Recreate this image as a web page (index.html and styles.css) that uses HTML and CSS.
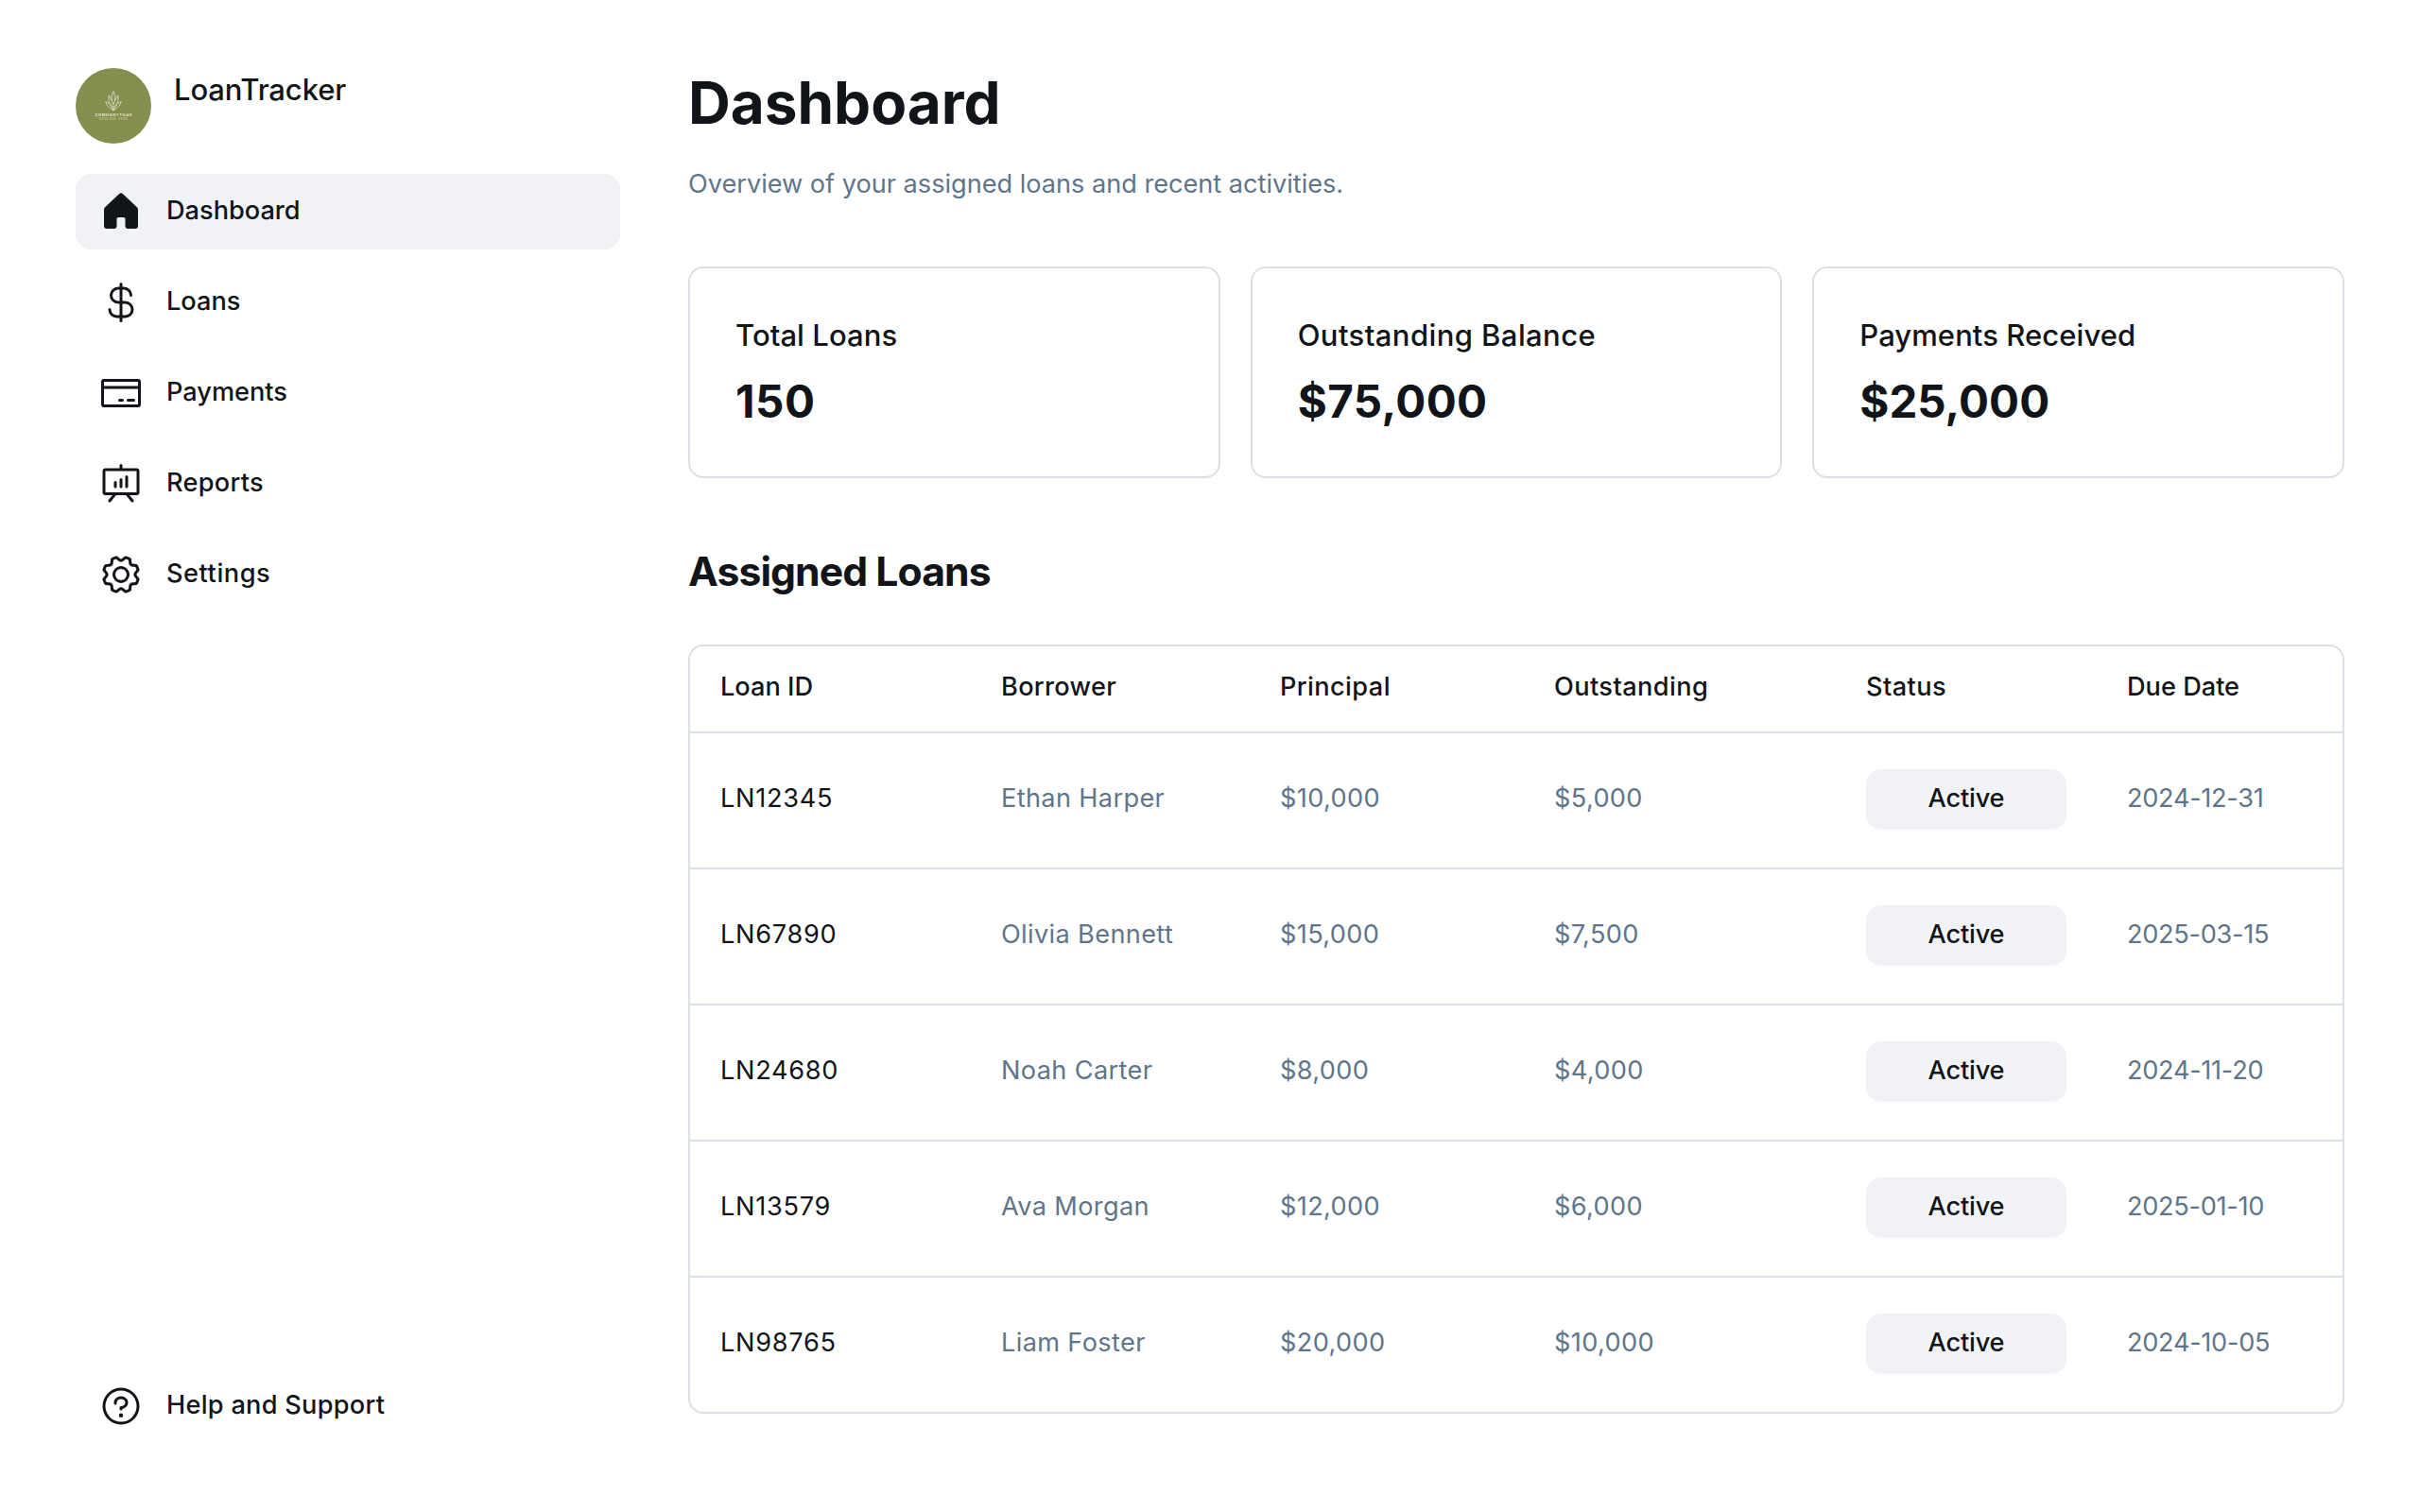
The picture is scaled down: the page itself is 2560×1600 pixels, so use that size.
FILE: index.html
```html
<!DOCTYPE html>
<html lang="en">
<head>
<meta charset="utf-8">
<title>LoanTracker – Dashboard</title>
<link rel="stylesheet" href="styles.css">
</head>
<body>
<div class="app">
  <aside class="sidebar">
    <div class="sidebar-top">
      <div class="brand">
        <svg class="avatar" viewBox="0 0 80 80" role="img" aria-label="Company logo">
          <circle cx="40" cy="40" r="40" fill="#858e4c"/>
          <g fill="none" stroke="#f2f3e4" stroke-width=".7" stroke-linecap="round" stroke-linejoin="round">
            <path d="M40 44.500V40M40 25c-2.400 3.500-2.600 9 0 13.500 2.600-4.500 2.400-10 0-13.500Z"/>
            <path d="M39 40.500c-3.500-2-4.300-6-4-11.500 1.500 1.200 2.600 3 3 5M41 40.500c3.500-2 4.300-6 4-11.500-1.500 1.200-2.600 3-3 5"/>
            <path d="M40 44.500c-2-4-4.200-7.500-8.300-9 .6 3.500 3.500 6.500 8.300 9c2-4 4.200-7.500 8.300-9-.6 3.500-3.500 6.500-8.300 9"/>
          </g>
          <text class="logo-name" x="40" y="50.600" textLength="39">COMHANYTHAK</text>
          <text class="logo-tag" x="40" y="55.200" textLength="30">DAOLAUE HERE</text>
        </svg>
        <div class="brand-name">LoanTracker</div>
      </div>
      <nav class="nav">
        <a class="nav-item active"><svg class="icon" viewBox="0 0 256 256"><path d="M224,115.550V208a16,16,0,0,1-16,16H168a16,16,0,0,1-16-16V168a8,8,0,0,0-8-8H112a8,8,0,0,0-8,8v40a16,16,0,0,1-16,16H48a16,16,0,0,1-16-16V115.550a16,16,0,0,1,5.170-11.780l80-75.480.11-.11a16,16,0,0,1,21.530,0,1.140,1.140,0,0,0,.11.110l80,75.480A16,16,0,0,1,224,115.550Z"/></svg><span class="nav-label">Dashboard</span></a>
        <a class="nav-item"><svg class="icon" viewBox="0 0 256 256"><path d="M152,120H136V56h8a32,32,0,0,1,32,32,8,8,0,0,0,16,0,48.050,48.050,0,0,0-48-48h-8V24a8,8,0,0,0-16,0V40h-8a48,48,0,0,0,0,96h8v64H104a32,32,0,0,1-32-32,8,8,0,0,0-16,0,48.050,48.050,0,0,0,48,48h16v16a8,8,0,0,0,16,0V216h16a48,48,0,0,0,0-96Zm-40,0a32,32,0,0,1,0-64h8v64Zm40,80H136V136h16a32,32,0,0,1,0,64Z"/></svg><span class="nav-label">Loans</span></a>
        <a class="nav-item"><svg class="icon" viewBox="0 0 256 256"><path d="M224,48H32A16,16,0,0,0,16,64V192a16,16,0,0,0,16,16H224a16,16,0,0,0,16-16V64A16,16,0,0,0,224,48Zm0,16V88H32V64Zm0,128H32V104H224v88Zm-16-24a8,8,0,0,1-8,8H168a8,8,0,0,1,0-16h32A8,8,0,0,1,208,168Zm-64,0a8,8,0,0,1-8,8H120a8,8,0,0,1,0-16h16A8,8,0,0,1,144,168Z"/></svg><span class="nav-label">Payments</span></a>
        <a class="nav-item"><svg class="icon" viewBox="0 0 256 256"><path d="M216,40H136V24a8,8,0,0,0-16,0V40H40A16,16,0,0,0,24,56V176a16,16,0,0,0,16,16H79.360L57.750,219a8,8,0,0,0,12.500,10l29.590-37h56.320l29.590,37a8,8,0,1,0,12.500-10l-21.610-27H216a16,16,0,0,0,16-16V56A16,16,0,0,0,216,40Zm0,136H40V56H216V176ZM104,120v24a8,8,0,0,1-16,0V120a8,8,0,0,1,16,0Zm32-16v40a8,8,0,0,1-16,0V104a8,8,0,0,1,16,0Zm32-16v56a8,8,0,0,1-16,0V88a8,8,0,0,1,16,0Z"/></svg><span class="nav-label mid">Reports</span></a>
        <a class="nav-item"><svg class="icon" viewBox="0 0 256 256"><path d="M128,80a48,48,0,1,0,48,48A48.050,48.050,0,0,0,128,80Zm0,80a32,32,0,1,1,32-32A32,32,0,0,1,128,160Zm88-29.840q.06-2.160,0-4.320l14.920-18.640a8,8,0,0,0,1.480-7.060,107.210,107.210,0,0,0-10.880-26.250,8,8,0,0,0-6-3.930l-23.720-2.640q-1.480-1.560-3-3L186,40.540a8,8,0,0,0-3.940-6,107.710,107.710,0,0,0-26.250-10.870,8,8,0,0,0-7.060,1.490L130.160,40Q128,40,125.840,40L107.200,25.110a8,8,0,0,0-7.060-1.480A107.600,107.600,0,0,0,73.890,34.510a8,8,0,0,0-3.930,6L67.320,64.270q-1.560,1.490-3,3L40.540,70a8,8,0,0,0-6,3.940,107.710,107.710,0,0,0-10.870,26.250,8,8,0,0,0,1.490,7.060L40,125.840Q40,128,40,130.160L25.110,148.800a8,8,0,0,0-1.480,7.060,107.210,107.210,0,0,0,10.880,26.250,8,8,0,0,0,6,3.930l23.720,2.640q1.490,1.560,3,3L70,215.460a8,8,0,0,0,3.940,6,107.710,107.710,0,0,0,26.250,10.870,8,8,0,0,0,7.060-1.490L125.840,216q2.160.06,4.320,0l18.640,14.920a8,8,0,0,0,7.060,1.480,107.210,107.210,0,0,0,26.250-10.880,8,8,0,0,0,3.930-6l2.640-23.720q1.560-1.480,3-3L215.460,186a8,8,0,0,0,6-3.940,107.710,107.710,0,0,0,10.870-26.250,8,8,0,0,0-1.490-7.060Zm-16.100-6.500a73.930,73.930,0,0,1,0,8.680,8,8,0,0,0,1.740,5.480l14.190,17.730a91.570,91.570,0,0,1-6.230,15L187,173.110a8,8,0,0,0-5.100,2.640,74.110,74.110,0,0,1-6.140,6.140,8,8,0,0,0-2.640,5.100l-2.510,22.580a91.320,91.320,0,0,1-15,6.230l-17.740-14.190a8,8,0,0,0-5-1.750h-.48a73.930,73.930,0,0,1-8.680,0,8,8,0,0,0-5.480,1.740L100.450,215.800a91.570,91.570,0,0,1-15-6.230L82.890,187a8,8,0,0,0-2.640-5.100,74.110,74.110,0,0,1-6.140-6.140,8,8,0,0,0-5.100-2.640L46.430,170.600a91.320,91.320,0,0,1-6.230-15l14.190-17.740a8,8,0,0,0,1.740-5.480,73.930,73.930,0,0,1,0-8.680,8,8,0,0,0-1.740-5.480L40.200,100.450a91.570,91.570,0,0,1,6.230-15L69,82.890a8,8,0,0,0,5.100-2.640,74.110,74.110,0,0,1,6.140-6.140A8,8,0,0,0,82.890,69L85.400,46.430a91.320,91.320,0,0,1,15-6.230l17.740,14.190a8,8,0,0,0,5.480,1.740,73.930,73.930,0,0,1,8.680,0,8,8,0,0,0,5.480-1.740L155.550,40.200a91.570,91.570,0,0,1,15,6.230L173.110,69a8,8,0,0,0,2.640,5.100,74.110,74.110,0,0,1,6.140,6.140,8,8,0,0,0,5.100,2.640l22.580,2.510a91.320,91.320,0,0,1,6.230,15l-14.190,17.740A8,8,0,0,0,199.870,123.660Z"/></svg><span class="nav-label wide">Settings</span></a>
      </nav>
    </div>
    <a class="nav-item"><svg class="icon" viewBox="0 0 256 256"><path d="M140,180a12,12,0,1,1-12-12A12,12,0,0,1,140,180ZM128,72c-22.060,0-40,16.150-40,36v4a8,8,0,0,0,16,0v-4c0-11,10.770-20,24-20s24,9,24,20-10.770,20-24,20a8,8,0,0,0-8,8v8a8,8,0,0,0,16,0v-.72c18.240-3.350,32-17.900,32-35.280C168,88.150,150.060,72,128,72Zm104,56A104,104,0,1,1,128,24,104.110,104.110,0,0,1,232,128Zm-16,0a88,88,0,1,0-88,88A88.100,88.100,0,0,0,216,128Z"/></svg><span class="nav-label mid">Help and Support</span></a>
  </aside>

  <main class="main">
    <h1 class="title">Dashboard</h1>
    <p class="subtitle">Overview of your assigned loans and recent activities.</p>

    <section class="stats">
      <div class="stat"><div class="stat-label">Total Loans</div><div class="stat-value loose">150</div></div>
      <div class="stat"><div class="stat-label wide">Outstanding Balance</div><div class="stat-value">$75,000</div></div>
      <div class="stat"><div class="stat-label">Payments Received</div><div class="stat-value tight">$25,000</div></div>
    </section>

    <h2 class="section-title">Assigned Loans</h2>

    <div class="table">
      <div class="row head">
        <div class="cell">Loan ID</div><div class="cell wide">Borrower</div><div class="cell wider">Principal</div><div class="cell wider">Outstanding</div><div class="cell wider">Status</div><div class="cell">Due Date</div>
      </div>
      <div class="row"><div class="cell id">LN12345</div><div class="cell">Ethan Harper</div><div class="cell">$10,000</div><div class="cell">$5,000</div><div class="status"><span class="cell pill">Active</span></div><div class="cell date">2024-12-31</div></div>
      <div class="row"><div class="cell id">LN67890</div><div class="cell">Olivia Bennett</div><div class="cell">$15,000</div><div class="cell">$7,500</div><div class="status"><span class="cell pill">Active</span></div><div class="cell date">2025-03-15</div></div>
      <div class="row"><div class="cell id">LN24680</div><div class="cell">Noah Carter</div><div class="cell">$8,000</div><div class="cell">$4,000</div><div class="status"><span class="cell pill">Active</span></div><div class="cell date">2024-11-20</div></div>
      <div class="row"><div class="cell id">LN13579</div><div class="cell">Ava Morgan</div><div class="cell">$12,000</div><div class="cell">$6,000</div><div class="status"><span class="cell pill">Active</span></div><div class="cell date">2025-01-10</div></div>
      <div class="row"><div class="cell id">LN98765</div><div class="cell">Liam Foster</div><div class="cell">$20,000</div><div class="cell">$10,000</div><div class="status"><span class="cell pill">Active</span></div><div class="cell date">2024-10-05</div></div>
    </div>
  </main>
</div>
</body>
</html>
```
FILE: styles.css
```css
* { box-sizing: border-box; margin: 0; }

body {
  background: #fff;
  color: #111418;
  font-family: "Inter", "Liberation Sans", sans-serif;
  font-size: 27.16px;
}

.app {
  display: flex;
  gap: 72px;
  height: 1600px;
  padding: 72px 80px;
}

/* Sidebar */
.sidebar {
  display: flex;
  flex-direction: column;
  justify-content: space-between;
  flex: none;
  width: 576px;
}
.sidebar-top { display: flex; flex-direction: column; gap: 32px; }
.brand { display: flex; gap: 24px; height: 80px; }
.avatar { width: 80px; height: 80px; flex: none; }
.logo-name, .logo-tag { text-anchor: middle; }
.logo-name { font-size: 3.9px; font-weight: 600; fill: #eef0da; }
.logo-tag { font-size: 2.8px; font-weight: 500; fill: #d3d7b4; }
.brand-name {
  font-size: 31.04px;
  font-weight: 500;
  line-height: 46px;
  letter-spacing: -0.12px;
}
.nav { display: flex; flex-direction: column; gap: 16px; }
.nav-item {
  display: flex;
  align-items: center;
  gap: 24px;
  height: 80px;
  padding: 0 24px;
  border-radius: 16px;
}
.nav-item.active { background: #f0f2f5; }
.icon { width: 48px; height: 48px; flex: none; fill: currentColor; }
.nav-label {
  font-weight: 500;
  line-height: 42px;
  padding-bottom: 2px;
  letter-spacing: 0;
}
.nav-label.mid { letter-spacing: 0.27px; }
.nav-label.wide { letter-spacing: 0.54px; }

/* Main column */
.main { flex: 1; min-width: 0; }
.title {
  font-size: 62px;
  font-weight: 700;
  line-height: 80px;
  padding-bottom: 25px;
  margin-top: -3px;
}
.subtitle {
  color: #60758a;
  line-height: 42px;
  letter-spacing: -0.02px;
  margin-bottom: 66px;
}

.stats { display: grid; grid-template-columns: repeat(3, 1fr); gap: 32px; }
.stat {
  height: 224px;
  padding: 48px;
  border: 2px solid #dbe0e6;
  border-radius: 16px;
}
.stat-label {
  font-size: 31.04px;
  font-weight: 500;
  line-height: 46px;
  letter-spacing: 0.05px;
}
.stat-label.wide { letter-spacing: 0.4px; }
.stat-value {
  margin-top: 19px;
  font-size: 47.5px;
  font-weight: 700;
  line-height: 56px;
  letter-spacing: 0.4px;
}
.stat-value.loose { letter-spacing: 0.6px; }
.stat-value.tight { letter-spacing: 0; }

.section-title {
  margin: 72px 0 50px;
  font-size: 42.7px;
  font-weight: 700;
  line-height: 54px;
  letter-spacing: -0.94px;
}

/* Loans table */
.table { border: 2px solid #dbe0e6; border-radius: 16px; overflow: hidden; }
.row {
  display: grid;
  grid-template-columns: 297px 295px 290px 330px 276px 1fr;
  align-items: center;
  height: 144px;
  padding: 0 0 2px 32px;
  border-top: 2px solid #dbe0e6;
  color: #60758a;
}
.row.head {
  height: 90px;
  border-top: 0;
  padding-bottom: 0;
  color: #111418;
  font-weight: 500;
}
.cell { line-height: 42px; padding-bottom: 2px; letter-spacing: 0.35px; }
.head .cell { padding-bottom: 4px; letter-spacing: 0; }
.head .wide { letter-spacing: 0.3px; }
.head .wider { letter-spacing: 0.4px; }
.cell.id { color: #111418; letter-spacing: 0.7px; }
.cell.date { letter-spacing: -0.3px; }
.status { display: flex; }
.cell.pill {
  width: 212px;
  height: 64px;
  border-radius: 16px;
  background: #f0f2f5;
  color: #111418;
  font-weight: 500;
  line-height: 62px;
  letter-spacing: -0.18px;
  text-align: center;
}
```
